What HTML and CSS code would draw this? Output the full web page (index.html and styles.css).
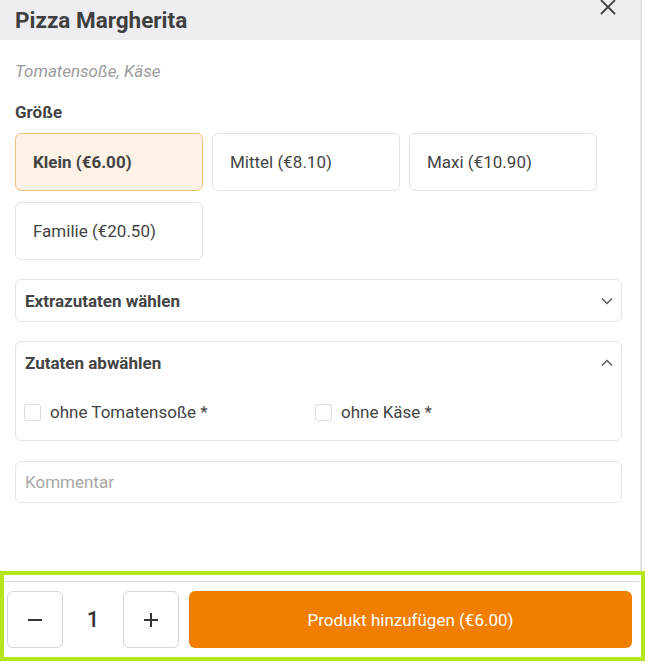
FILE: index.html
```html
<!DOCTYPE html>
<html lang="de">
<head>
<meta charset="utf-8">
<title>Pizza Margherita</title>
<link rel="stylesheet" href="styles.css">
</head>
<body>
<div class="page">
  <div class="dialog">
    <header class="head">
      <h1 class="title">Pizza Margherita</h1>
      <button class="close" aria-label="Schließen">
        <svg width="16" height="16" viewBox="0 0 16 16"><path d="M1.5 1.5 L14.5 14.5 M14.5 1.5 L1.5 14.5" stroke="#444" stroke-width="1.8" fill="none" stroke-linecap="round"/></svg>
      </button>
    </header>
    <div class="content">
      <p class="desc">Tomatensoße, Käse</p>
      <h2 class="label">Größe</h2>
      <div class="sizes">
        <button class="size selected">Klein (€6.00)</button>
        <button class="size">Mittel (€8.10)</button>
        <button class="size">Maxi (€10.90)</button>
        <button class="size">Familie (€20.50)</button>
      </div>
      <div class="panel">
        <div class="panel-head">
          <span>Extrazutaten wählen</span>
          <svg width="12" height="8" viewBox="0 0 12 8"><path d="M1 1.5 L6 6.5 L11 1.5" stroke="#555" stroke-width="1.3" fill="none"/></svg>
        </div>
      </div>
      <div class="panel">
        <div class="panel-head">
          <span>Zutaten abwählen</span>
          <svg width="12" height="8" viewBox="0 0 12 8"><path d="M1 6.5 L6 1.5 L11 6.5" stroke="#555" stroke-width="1.3" fill="none"/></svg>
        </div>
        <div class="checks">
          <label class="check"><span class="box"></span>ohne Tomatensoße *</label>
          <label class="check"><span class="box"></span>ohne Käse *</label>
        </div>
      </div>
      <div class="comment">Kommentar</div>
    </div>
  </div>
  <footer class="footer">
    <div class="footer-line"></div>
    <div class="footer-row">
      <button class="qty-btn" aria-label="weniger">
        <svg width="18" height="18" viewBox="0 0 18 18"><path d="M2 9 H16" stroke="#333" stroke-width="2"/></svg>
      </button>
      <span class="qty">1</span>
      <button class="qty-btn" aria-label="mehr">
        <svg width="18" height="18" viewBox="0 0 18 18"><path d="M2 9 H16 M9 2 V16" stroke="#333" stroke-width="2"/></svg>
      </button>
      <button class="add">Produkt hinzufügen (€6.00)</button>
    </div>
  </footer>
</div>
</body>
</html>
```

FILE: styles.css
```css
* { box-sizing: border-box; }
html, body { margin: 0; padding: 0; background: #fff; }
body {
  font-family: Roboto, "Liberation Sans", sans-serif;
  color: #444;
  width: 648px;
  height: 665px;
  overflow: hidden;
}
button { font-family: inherit; cursor: pointer; }
.page { width: 648px; }
.dialog {
  width: 642px;
  height: 571px;
  border-right: 2px solid #e3e3e5;
}
.head {
  height: 40px;
  background: #eeedf1;
  display: flex;
  justify-content: space-between;
  align-items: flex-start;
  padding: 8px 24px 0 15px;
}
.title {
  margin: 0;
  font-size: 22.5px;
  line-height: 24px;
  font-weight: 700;
  color: #3f3f3f;
}
.close {
  margin-top: -9px;
  padding: 0;
  border: 0;
  background: none;
  width: 16px;
  height: 16px;
}
.close svg { display: block; }
.content { padding: 19px 18px 0 15px; }
.desc {
  margin: 0;
  font-size: 17px;
  line-height: 24px;
  font-style: italic;
  color: #9b9b9b;
}
.label {
  margin: 17px 0 0;
  font-size: 17px;
  line-height: 24px;
  font-weight: 700;
  color: #444;
}
.sizes {
  margin-top: 9px;
  display: grid;
  grid-template-columns: repeat(3, 188px);
  column-gap: 9px;
  row-gap: 11px;
}
.size {
  height: 58px;
  text-align: left;
  padding: 0 0 0 17px;
  font-size: 17px;
  color: #444;
  background: #fff;
  border: 1px solid #e2e2e2;
  border-radius: 6px;
}
.size.selected {
  background: #fdf2e5;
  border-color: #f2c081;
  font-weight: 700;
}
.panel {
  margin-top: 19px;
  border: 1px solid #e4e4e4;
  border-radius: 6px;
}
.panel-head {
  height: 41px;
  display: flex;
  align-items: center;
  justify-content: space-between;
  padding: 0 8px 0 9px;
  font-size: 17px;
  font-weight: 700;
  color: #444;
}
.panel-head svg { display: block; }
.checks {
  display: grid;
  grid-template-columns: 291px 1fr;
  padding: 17px 8px 16px;
}
.check {
  display: flex;
  align-items: center;
  font-size: 17px;
  line-height: 24px;
  color: #444;
}
.box {
  width: 17px;
  height: 17px;
  border: 1px solid #dedede;
  border-radius: 2px;
  margin-right: 9px;
  background: #fff;
}
.comment {
  margin-top: 20px;
  height: 42px;
  border: 1px solid #e6e6e6;
  border-radius: 6px;
  padding: 0 9px;
  display: flex;
  align-items: center;
  font-size: 17px;
  color: #a8a8a8;
}
.footer {
  width: 645px;
  height: 90px;
  border: 4px solid #b6e51e;
  background: #fff;
}
.footer-line {
  margin-top: 6px;
  height: 1px;
  width: 635px;
  background: #dcdcdc;
}
.footer-row {
  display: flex;
  align-items: center;
  padding: 9px 0 0 3px;
}
.qty-btn {
  width: 56px;
  height: 57px;
  border: 1px solid #d6d6d6;
  border-radius: 6px;
  background: #fff;
  display: flex;
  align-items: center;
  justify-content: center;
  padding: 0;
}
.qty-btn svg { display: block; }
.qty {
  width: 60px;
  text-align: center;
  font-size: 22px;
  font-weight: 500;
  color: #333;
}
.add {
  margin-left: 10px;
  width: 443px;
  height: 57px;
  background: #f27e00;
  color: #fff;
  border: 0;
  border-radius: 6px;
  font-size: 17px;
}
```
